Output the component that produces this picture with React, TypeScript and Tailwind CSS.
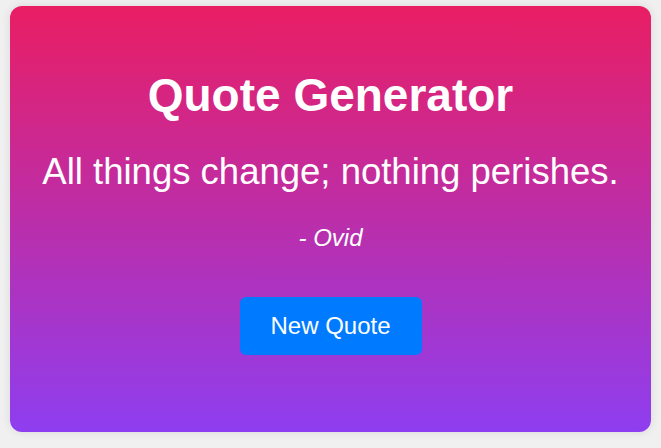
export default function App() {
  return (
    <div className="h-[448px] w-[661px] bg-[#f0f0f0] px-[10px] pt-[6px] pb-[16px] font-['Liberation_Sans',Arial,sans-serif]">
      <div className="flex h-[426px] flex-col items-center rounded-xl bg-[linear-gradient(to_bottom,#e91e63,#8e3ef0)] pt-[63px] text-center text-white shadow-[0_0_10px_rgba(0,0,0,0.1)]">
        <h1 className="text-[46px] font-bold leading-[52px]">Quote Generator</h1>
        <p className="mt-[30px] text-[36.5px] leading-[42px]">
          All things change; nothing perishes.
        </p>
        <p className="mt-[31px] text-[24px] italic leading-[28px]">- Ovid</p>
        <button className="mt-[45px] h-[58px] w-[182px] rounded-md bg-[#007bff] text-[24px] leading-[28px] text-white">
          New Quote
        </button>
      </div>
    </div>
  );
}
